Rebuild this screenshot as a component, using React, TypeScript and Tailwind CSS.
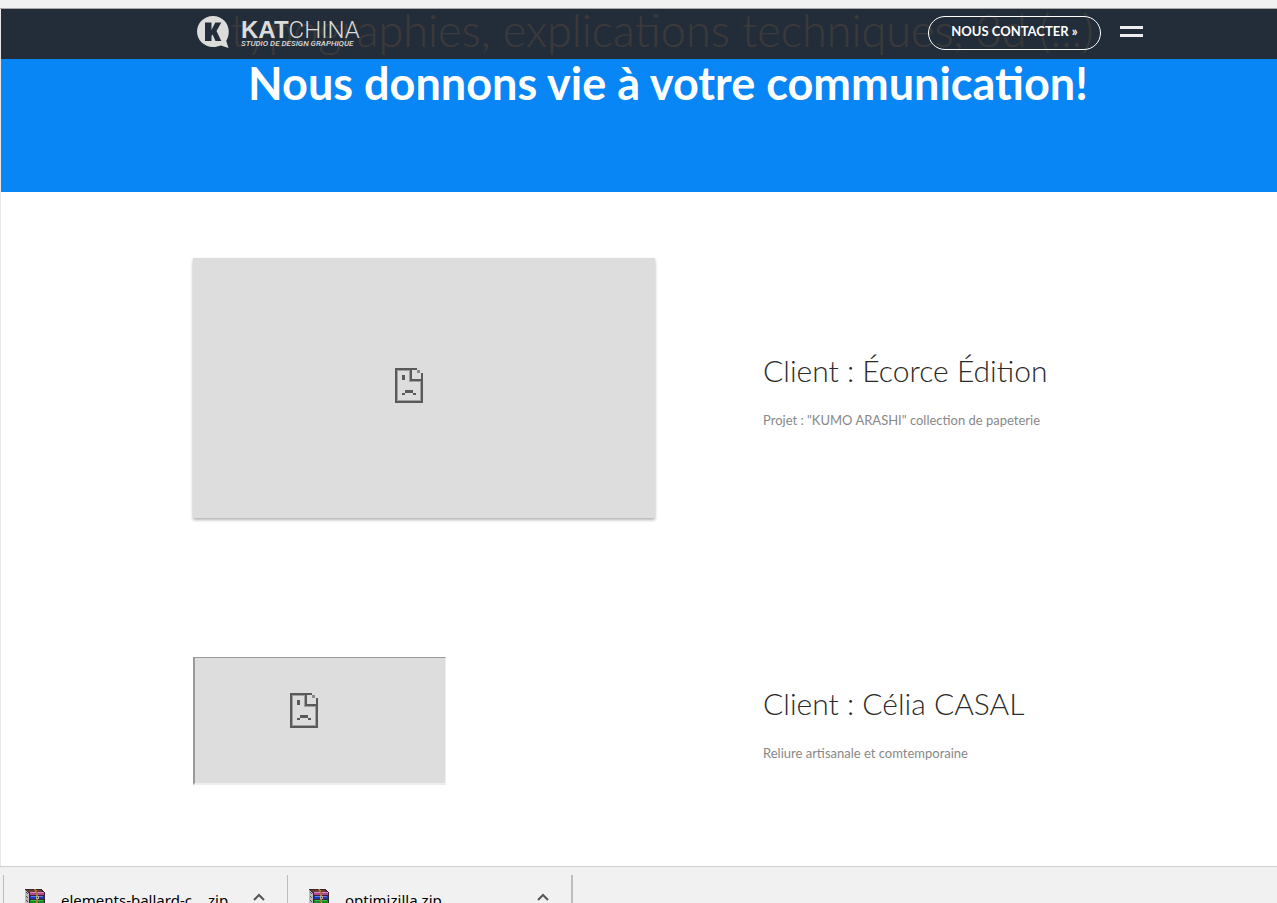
import React from "react";

interface Project {
  client: string;
  description: string;
  framed: boolean;
}

interface Download {
  name: string;
}

const projects: Project[] = [
  {
    client: "Client : Écorce Édition",
    description: 'Projet : "KUMO ARASHI" collection de papeterie',
    framed: false,
  },
  {
    client: "Client : Célia CASAL",
    description: "Reliure artisanale et comtemporaine",
    framed: true,
  },
];

const downloads: Download[] = [{ name: "elements-ballard-c....zip" }, { name: "optimizilla.zip" }];

const LogoMark = () => (
  <svg width="32" height="32" viewBox="0 0 32 32" fill="none" aria-hidden="true">
    <path
      d="M16 0C7.2 0 0 7 0 15.5S7.2 31 16 31c3 0 5.500-.7 8-1.500L31.500 32l-2.300-7.200c1.700-2.700 2.600-5.900 2.600-9.300C31.800 7 24.800 0 16 0Z"
      fill="#dcdcda"
    />
    <path d="M8 6.500h6.500v7.500l3.800-7.500h6l-4.800 8.500 4.800 10h-5.800l-3-6.500-1 1.500V25H8V6.500Z" fill="#232e3a" />
  </svg>
);

const SadFile = () => (
  <svg width="28" height="35" viewBox="0 0 28 35" fill="#5a5a5a" shapeRendering="crispEdges" aria-hidden="true">
    <path d="M2 2h15v11h9v20H2V2Zm1 1v29h22V14H14V3H3Z" fill="#a0a0a0" fillRule="evenodd" />
    <path d="M0 0h22v2h3v3h3v30H0V0Zm2 2v31h24V13H15V2H2Zm15 0v9h9V5h-3V2h-6Z" fillRule="evenodd" />
    <path d="M22 2h3v3h-3z" fill="#8a8a8a" />
    <path d="M7 7h3v5H7zM10 22h8v3h-8zM7 25h3v2H7zM18 25h3v2h-3z" />
  </svg>
);

// stack of three books held by a belt
const ArchiveIcon = () => (
  <svg width="20" height="20" viewBox="0 0 20 20" shapeRendering="crispEdges" aria-hidden="true">
    <path d="M0 0h16l4 3v17H4L0 16Z" fill="#3a2430" />
    <path d="M1 1h14l3 2H4Z" fill="#6b4030" />
    <path d="M0 1l4 3v16l-4-3Z" fill="#b9b9b9" />
    <path d="M1 3l2 2v1L1 4zM1 7l2 2v1L1 8zM1 11l2 2v1l-2-2z" fill="#555" />
    <path d="M5 3h14v3H5z" fill="#b0459a" />
    <path d="M5 3h14v1H5z" fill="#d884c4" />
    <path d="M5 7h14v3H5z" fill="#2038b8" />
    <path d="M6 7h12v1H6z" fill="#4d82e8" />
    <path d="M5 11h14v4H5z" fill="#118a28" />
    <path d="M6 11h12v1H6z" fill="#35c045" />
    <path d="M9 0h2l2 4v16h-2V4Z" fill="#a87838" />
    <path d="M11 7h3v3h-3z" fill="#b8a890" />
    <path d="M12 8h1v1h-1z" fill="#4a3a38" />
  </svg>
);

const Header: React.FC = () => {
  return (
    <header className="absolute inset-x-0 top-0 h-[50px] bg-[#262425]/90 pl-49 pr-[134px] flex items-start justify-between">
      <a href="#accueil" className="flex items-start gap-3 pt-[7px] text-[#dcdcda]">
        <LogoMark />
        <span className="block pt-1 font-[Roboto]">
          <span className="block text-[24px] leading-5">
            <span className="font-['Liberation_Sans'] font-bold">KAT</span>
            <span className="font-light">CHINA</span>
          </span>
          <span className="block text-[8px] leading-2 font-medium italic whitespace-nowrap">
            STUDIO DE DESIGN GRAPHIQUE
          </span>
        </span>
      </a>
      <div className="flex items-center gap-[19px] pt-[7px]">
        <a
          href="#contact"
          className="h-[34px] w-[173px] rounded-full border border-white text-white text-[13px] leading-[29px] font-bold text-center whitespace-nowrap"
        >
          NOUS CONTACTER »
        </a>
        <button type="button" aria-label="Menu" className="flex w-[23px] flex-col gap-[5px] pb-1">
          <span className="h-[3px] w-full bg-[#eeeeee]" />
          <span className="h-[3px] w-full bg-[#eeeeee]" />
        </button>
      </div>
    </header>
  );
};

const ProjectRow: React.FC<{ project: Project }> = ({ project }) => {
  return (
    <article className="grid grid-cols-5 items-center">
      <div className="col-span-3">
        {project.framed ? (
          <div className="flex h-32 w-[253px] items-center justify-center border-t border-r border-b-2 border-l-2 border-t-[#9a9a9a] border-r-[#eeeeee] border-b-[#eeeeee] border-l-[#9a9a9a] bg-[#dddddd] pr-8 pb-5">
            <SadFile />
          </div>
        ) : (
          <div className="flex aspect-video w-[81%] items-center justify-center bg-[#dddddd] pr-[30px] pb-1 shadow-[0_2px_3px_rgba(0,0,0,0.3)]">
            <SadFile />
          </div>
        )}
      </div>
      <div className="col-span-2 pt-[6px]">
        <h2 className="text-[30px] leading-10 font-light text-[#2a2a2a] whitespace-nowrap">{project.client}</h2>
        <p className="mt-[18px] text-[13px] leading-6 text-[#888888]">{project.description}</p>
      </div>
    </article>
  );
};

const DownloadBar: React.FC = () => {
  return (
    <footer className="flex h-[37px] shrink-0 overflow-hidden border-t border-[#cfcfcf] bg-[#f1f1f1] pt-2 pl-[3px] font-['Noto_Sans']">
      {downloads.map((file) => (
        <div key={file.name} className="flex h-10 w-[284px] shrink-0 items-start border-l border-[#bdbdbd] pt-[14px] pl-[21px] pr-[22px]">
          <ArchiveIcon />
          <span className="ml-4 flex-1 text-[15px] leading-[22px] text-black whitespace-nowrap">{file.name}</span>
          <button type="button" aria-label="Options" className="pt-1">
            <svg width="12" height="8" viewBox="0 0 12 8" fill="none" stroke="#555" strokeWidth="2">
              <path d="M1 7l5-5 5 5" />
            </svg>
          </button>
        </div>
      ))}
      <div className="h-10 border-l-2 border-[#bdbdbd]" />
    </footer>
  );
};

export default function App() {
  return (
    <div className="flex h-screen flex-col overflow-hidden bg-white font-[Lato,sans-serif]">
      <div className="h-[9px] shrink-0 border-b border-[#a9a6a6] bg-[#f1f1f1]" />
      <main className="relative min-h-0 flex-1 overflow-hidden border-l border-[#e8e8e8]">
        <section className="overflow-hidden bg-[#0886f6] pb-[82px] pl-48 pr-[134px] text-center text-white">
          <h1 className="-mt-[5px] text-[45px] leading-[53px] whitespace-nowrap">
            <span className="block pr-3 font-light">typographies, explications techniques, 3d (...)</span>
            <span className="block font-bold">Nous donnons vie à votre communication!</span>
          </h1>
        </section>
        <Header />
        <section className="flex flex-col gap-[139px] pt-[66px] pl-48 pr-[134px]">
          {projects.map((project) => (
            <ProjectRow key={project.client} project={project} />
          ))}
        </section>
      </main>
      <DownloadBar />
    </div>
  );
}
